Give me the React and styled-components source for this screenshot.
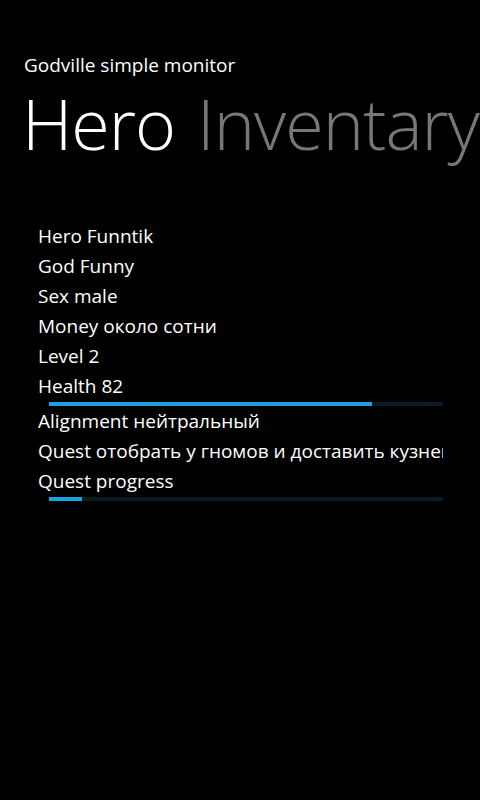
import React from "react";
import styled, { createGlobalStyle } from "styled-components";

const Global = createGlobalStyle`
  html, body {
    margin: 0;
    padding: 0;
    background: #000;
  }
  body {
    font-family: "Open Sans", "Noto Sans", sans-serif;
    color: #fff;
  }
`;

const Page = styled.div`
  width: 480px;
  height: 800px;
  background: #000;
  overflow: hidden;
  display: flex;
  flex-direction: column;
`;

const AppTitle = styled.div`
  margin: 51px 0 0 24px;
  font-size: 19px;
  line-height: 28px;
  color: #fff;
  white-space: nowrap;
`;

const PivotHeaders = styled.div`
  display: flex;
  gap: 22px;
  margin: 0 0 0 22px;
  white-space: nowrap;
  overflow: hidden;
`;

const PivotHeader = styled.div`
  font-size: 70px;
  font-weight: 300;
  line-height: 88px;
  letter-spacing: -1px;
  color: ${(p) => (p.$active ? "#fff" : "#777")};
`;

const List = styled.div`
  display: flex;
  flex-direction: column;
  margin: 54px 0 0 38px;
  width: 405px;
`;

const Row = styled.div`
  font-size: 19px;
  line-height: 30px;
  height: 30px;
  color: #fff;
  white-space: nowrap;
  overflow: hidden;
`;

const Track = styled.div`
  margin: 1px 0 0 11px;
  width: 394px;
  height: 4px;
  background: #0c1a24;
`;

const Fill = styled.div`
  height: 100%;
  background: #1ba1e2;
`;

const Progress = ({ value }) => (
  <Track>
    <Fill style={{ width: `${value}%` }} />
  </Track>
);

export default function App() {
  return (
    <>
      <Global />
      <Page>
        <AppTitle>Godville simple monitor</AppTitle>
        <PivotHeaders>
          <PivotHeader $active>Hero</PivotHeader>
          <PivotHeader>Inventary</PivotHeader>
        </PivotHeaders>
        <List>
          <Row>Hero Funntik</Row>
          <Row>God Funny</Row>
          <Row>Sex male</Row>
          <Row>Money около сотни</Row>
          <Row>Level 2</Row>
          <Row>Health 82</Row>
          <Progress value={82} />
          <Row>Alignment нейтральный</Row>
          <Row>Quest отобрать у гномов и доставить кузнецу</Row>
          <Row>Quest progress</Row>
          <Progress value={8.5} />
        </List>
      </Page>
    </>
  );
}
